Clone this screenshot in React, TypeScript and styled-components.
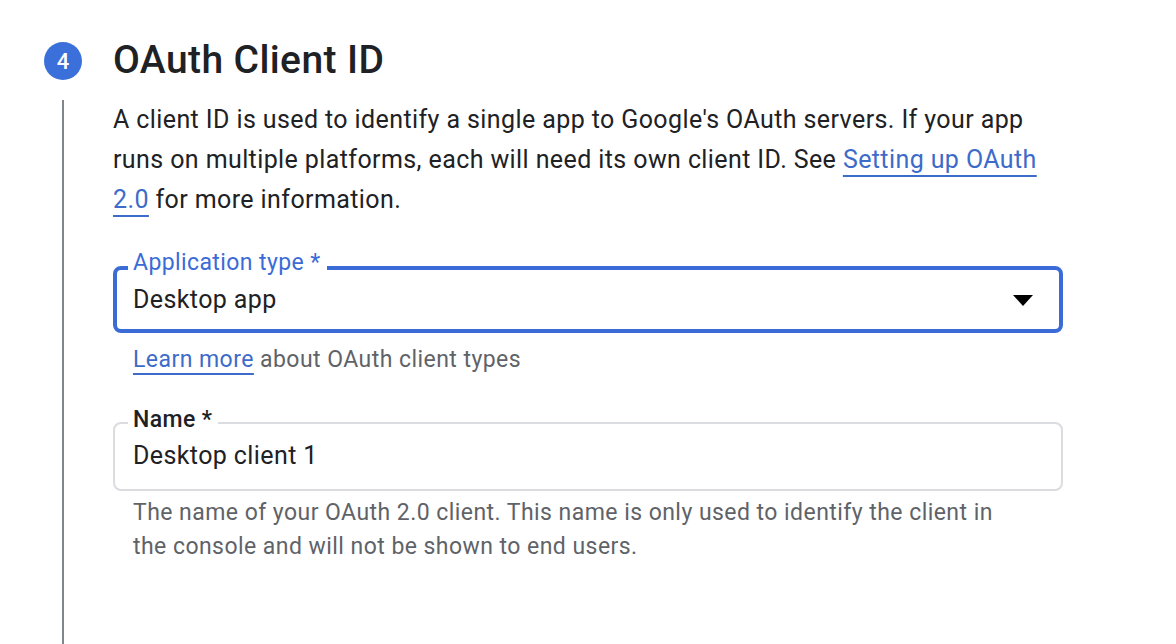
import styled, { createGlobalStyle } from "styled-components";

const GlobalStyle = createGlobalStyle`
  html, body {
    margin: 0;
    padding: 0;
    background: #fff;
  }
  body {
    font-family: Roboto, "Liberation Sans", Arial, sans-serif;
    color: #202124;
  }
`;

const Step = styled.div`
  display: flex;
  height: 644px;
  overflow: hidden;
`;

const Rail = styled.div`
  width: 113px;
  padding: 42px 0 0 44px;
  box-sizing: border-box;
  display: flex;
  flex-direction: column;
  flex-shrink: 0;
`;

const Badge = styled.div`
  width: 38px;
  height: 38px;
  border-radius: 50%;
  background: #3b6fd9;
  color: #fff;
  font-size: 22px;
  font-weight: 500;
  display: flex;
  align-items: center;
  justify-content: center;
`;

const RailLine = styled.div`
  width: 2px;
  flex: 1;
  margin: 20px 0 0 18px;
  background: #80868b;
`;

const Body = styled.div`
  width: 950px;
  padding-top: 36px;
`;

const Title = styled.h1`
  margin: 0;
  font-size: 39px;
  font-weight: 500;
  line-height: 48px;
  letter-spacing: 0.4px;
  color: #202124;
`;

const Intro = styled.p`
  margin: 16px 0 0;
  font-size: 25px;
  line-height: 40px;
  letter-spacing: 0.4px;
  color: #202124;
  width: 940px;
`;

const Link = styled.a`
  color: #3d6bc9;
  text-decoration: underline;
  text-decoration-thickness: 2px;
  text-underline-offset: 7px;
  cursor: pointer;
`;

const FieldWrap = styled.div<{ $gap: number }>`
  margin-top: ${(p) => p.$gap}px;
`;

const Field = styled.div<{ $focused?: boolean }>`
  position: relative;
  box-sizing: border-box;
  width: 950px;
  border: ${(p) => (p.$focused ? "4px solid #3b6bd6" : "2px solid #dadce0")};
  border-radius: 8px;
  height: ${(p) => (p.$focused ? "67px" : "69px")};
  padding: ${(p) => (p.$focused ? "0 26px 0 16px" : "0 26px 2px 18px")};
  display: flex;
  align-items: center;
  justify-content: space-between;
`;

const FieldLabel = styled.span<{ $focused?: boolean }>`
  position: absolute;
  top: ${(p) => (p.$focused ? "-21px" : "-18px")};
  left: ${(p) => (p.$focused ? "11px" : "13px")};
  padding: 0 6px 0 5px;
  background: #fff;
  font-size: 23px;
  line-height: 28px;
  letter-spacing: 0.4px;
  font-weight: ${(p) => (p.$focused ? 400 : 500)};
  color: ${(p) => (p.$focused ? "#3b6bd6" : "#202124")};
`;

const FieldValue = styled.span`
  font-size: 25px;
  letter-spacing: 0.4px;
  color: #202124;
`;

const Caret = styled.span`
  width: 0;
  height: 0;
  border-left: 10px solid transparent;
  border-right: 10px solid transparent;
  border-top: 11px solid #000;
  margin-top: 2px;
`;

const Helper = styled.div`
  padding-left: 20px;
  margin-top: 12px;
  font-size: 23px;
  line-height: 30px;
  letter-spacing: 0.45px;
  color: #5f6368;
`;

const HelperLink = styled(Link)`
  text-underline-offset: 6px;
`;

const Hint = styled.div`
  padding-left: 20px;
  margin-top: 5px;
  width: 875px;
  font-size: 23px;
  line-height: 34px;
  letter-spacing: 0.45px;
  color: #5f6368;
`;

export default function App() {
  return (
    <>
      <GlobalStyle />
      <Step>
        <Rail>
          <Badge>4</Badge>
          <RailLine />
        </Rail>
        <Body>
          <Title>OAuth Client ID</Title>
          <Intro>
            A client ID is used to identify a single app to Google's OAuth servers. If your app
            runs on multiple platforms, each will need its own client ID. See{" "}
            <Link>Setting up OAuth 2.0</Link> for more information.
          </Intro>
          <FieldWrap $gap={46}>
            <Field $focused>
              <FieldLabel $focused>Application type *</FieldLabel>
              <FieldValue>Desktop app</FieldValue>
              <Caret />
            </Field>
          </FieldWrap>
          <Helper>
            <HelperLink>Learn more</HelperLink> about OAuth client types
          </Helper>
          <FieldWrap $gap={47}>
            <Field>
              <FieldLabel>Name *</FieldLabel>
              <FieldValue>Desktop client 1</FieldValue>
            </Field>
          </FieldWrap>
          <Hint>
            The name of your OAuth 2.0 client. This name is only used to identify the client in
            the console and will not be shown to end users.
          </Hint>
        </Body>
      </Step>
    </>
  );
}
